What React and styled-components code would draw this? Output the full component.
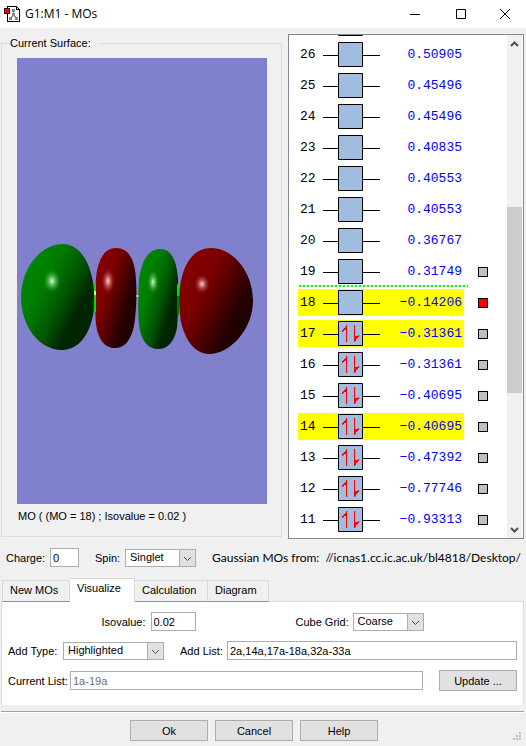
import React from 'react';
import styled, { createGlobalStyle } from 'styled-components';

const GlobalStyle = createGlobalStyle`
  * { box-sizing: border-box; }
  body {
    margin: 0;
    background: #f0f0f0;
    color: #000;
    font: 11px/14px "Liberation Sans", Arial, sans-serif;
  }
  button, input, select { font: inherit; color: inherit; }
`;

const orbitals = [
  { id: 26, energy: '0.50905' },
  { id: 25, energy: '0.45496' },
  { id: 24, energy: '0.45496' },
  { id: 23, energy: '0.40835' },
  { id: 22, energy: '0.40553' },
  { id: 21, energy: '0.40553' },
  { id: 20, energy: '0.36767' },
  { id: 19, energy: '0.31749', surface: true },
  { id: 18, energy: '−0.14206', surface: true, highlighted: true, current: true },
  { id: 17, energy: '−0.31361', surface: true, highlighted: true, filled: true },
  { id: 16, energy: '−0.31361', surface: true, filled: true },
  { id: 15, energy: '−0.40695', surface: true, filled: true },
  { id: 14, energy: '−0.40695', surface: true, highlighted: true, filled: true },
  { id: 13, energy: '−0.47392', surface: true, filled: true },
  { id: 12, energy: '−0.77746', surface: true, filled: true },
  { id: 11, energy: '−0.93313', surface: true, filled: true },
];

const GAP_BELOW = 19;

const TitleBar = styled.header`
  display: flex;
  align-items: center;
  height: 28px;
  padding-left: 4px;
  background: #fff;
`;

const Title = styled.h1`
  flex: 1;
  margin: 0 0 0 5px;
  font: 12px/16px "Open Sans", "Noto Sans", sans-serif;
`;

const CaptionButton = styled.button`
  display: flex;
  align-items: center;
  justify-content: center;
  width: 46px;
  height: 24px;
  padding: 0;
  border: 0;
  background: none;

  &:last-child { width: 42px; }
`;

const Main = styled.main`
  display: flex;
  gap: 6px;
  padding: 6px 2px 0 1px;
`;

const Group = styled.fieldset`
  flex: 1;
  min-width: 0;
  margin: 2px 0;
  padding: 8px 14px 13px 15px;
  border: 1px solid #dcdcdc;
`;

const Legend = styled.legend`
  margin-left: -8px;
  padding: 0 8px 0 1px;
  line-height: 14px;
`;

const Surface = styled.svg`
  display: block;
  width: 100%;
  height: 446px;
  background: #8080cc;
`;

const Caption = styled.p`
  margin: 5px 1px 0;
`;

const LevelPanel = styled.section`
  display: flex;
  width: 236px;
  height: 505px;
  padding-right: 1px;
  border: 1px solid #828790;
  background: #fff;
`;

const Levels = styled.div`
  display: flex;
  flex: 1;
  flex-direction: column;
  justify-content: flex-end;
  gap: 4px;
  padding: 0 19px 5px 9px;
  overflow: hidden;
`;

const LevelRow = styled.div`
  display: flex;
  flex: none;
  align-items: center;
  justify-content: space-between;
  height: 27px;
`;

const Level = styled.div`
  display: flex;
  align-items: center;
  width: 166px;
  height: 27px;
  padding: 0 2px;
  background: ${({ $highlighted }) => ($highlighted ? '#ff0' : 'none')};
  font: 13px/27px "Liberation Mono", "Courier New", monospace;
`;

const LevelNumber = styled.span`
  width: 23px;
`;

const Energy = styled.span`
  flex: 1;
  color: #00f;
  text-align: right;
`;

const Marker = styled.input`
  appearance: none;
  width: 10px;
  height: 10px;
  margin: 0;
  border: 1px solid #000;
  background: #c0c0c0;

  &:checked { background: #f00; }
`;

const Gap = styled.div`
  flex: none;
  width: 169px;
  height: 2px;
  margin: -4px 0 -2px 1px;
  background: repeating-linear-gradient(90deg, #0f0 0 2px, #fff 2px 4px);
`;

const ScrollBar = styled.div`
  display: flex;
  flex-direction: column;
  justify-content: space-between;
  align-items: center;
  width: 15px;
  background: #f0f0f0;
`;

const ScrollButton = styled.button`
  display: flex;
  align-items: center;
  justify-content: center;
  width: 15px;
  height: 17px;
  padding: 0;
  border: 0;
  background: none;
`;

const Track = styled.div`
  display: flex;
  flex: 1;
  flex-direction: column;
  width: 100%;
`;

const Space = styled.div`
  flex: ${({ $size }) => $size};
`;

const Thumb = styled.div`
  flex: 186;
  background: #cdcdcd;
`;

const MoleculeBar = styled.div`
  display: flex;
  align-items: center;
  gap: 16px;
  margin-top: 9px;
  padding-left: 6px;
`;

const Field = styled.div`
  display: flex;
  align-items: center;
  flex: ${({ $grow }) => ($grow ? '1' : 'none')};
`;

const Label = styled.label`
  flex: none;
  width: ${({ $width }) => $width}px;
`;

const TextBox = styled.input`
  flex: ${({ $width }) => ($width ? 'none' : '1')};
  width: ${({ $width }) => ($width ? `${$width}px` : 'auto')};
  min-width: 0;
  height: 19px;
  padding: 1px 2px 0;
  border: 1px solid #abadb3;
  border-radius: 0;
  background: #fff;

  &:disabled { color: #6d6d6d; }
`;

const SelectFrame = styled.div`
  position: relative;
  width: ${({ $width }) => $width}px;
  height: 18px;
`;

const SelectBox = styled.select`
  appearance: none;
  display: block;
  width: 100%;
  height: 18px;
  padding: 0 18px 2px 4px;
  border: 1px solid #abadb3;
  border-radius: 0;
  background: #fff;
`;

const SelectArrow = styled.span`
  position: absolute;
  top: 0;
  right: 0;
  display: flex;
  align-items: center;
  justify-content: center;
  width: 17px;
  height: 18px;
  padding-top: 2px;
  border: 1px solid #adadad;
  background: #e1e1e1;
  pointer-events: none;
`;

const Source = styled.span`
  font: 12px/16px Lato, "Open Sans", sans-serif;
  white-space: pre;
`;

const TabList = styled.div`
  position: relative;
  display: flex;
  align-items: flex-end;
  height: 24px;
  margin: 11px 2px -1px;
`;

const Tab = styled.button`
  width: ${({ $width }) => $width}px;
  height: 22px;
  padding: 0 0 2px 7px;
  border: 1px solid #d9d9d9;
  border-width: 1px 1px 1px 0;
  border-bottom-color: #8c9494;
  background: #f0f0f0;
  text-align: left;

  &:first-child { border-left-width: 1px; }

  &[aria-selected='true'] {
    height: 24px;
    padding-bottom: 4px;
    border-bottom-color: #fff;
    background: #fff;
  }
`;

const TabPanel = styled.section`
  display: flex;
  flex-direction: column;
  gap: 10px;
  margin: 0 2px 0 1px;
  padding: 10px 6px 14px;
  border: 1px solid #dcdcdc;
  border-bottom: 0;
  background: #fff;
`;

const PanelRow = styled.div`
  display: flex;
  align-items: center;
  gap: 16px;
`;

const CenteredRow = styled(PanelRow)`
  justify-content: center;
  gap: 100px;
`;

const Button = styled.button`
  width: 78px;
  height: 21px;
  padding: 0;
  border: 1px solid #adadad;
  background: #e1e1e1;
`;

const Footer = styled.footer`
  position: relative;
  display: flex;
  justify-content: center;
  gap: 7px;
  margin: 6px 2px 0 1px;
  padding: 8px 17px 5px 0;
  border-top: 1px solid #a0a0a0;
  box-shadow: inset 0 1px #fff;
`;

const Grip = styled.svg`
  position: absolute;
  right: 3px;
  bottom: 6px;
`;

const AppIcon = () => (
  <svg width="16" height="16" viewBox="0 0 16 16" shapeRendering="crispEdges" aria-hidden="true">
    <path d="M3.5 .5h9l3 3v12h-12z" fill="#fff" stroke="#000" />
    <path d="M12.5 .5v3h3" fill="none" stroke="#000" />
    <path d="M9.5 4v5l-3 3M9.5 9l3 3" fill="none" stroke="#888" />
    <path d="M8 3h3v3H8zM8 7h3v3H8zM5 11h3v3H5zM11 11h3v3h-3z" fill="#888" />
    <path d="M.5 2.5h5v5h-5z" fill="#f00" stroke="#400" />
  </svg>
);

const Chevron = ({ up, thin }) => (
  <svg width="9" height="6" viewBox="0 0 9 6" aria-hidden="true">
    <path
      d={up ? 'M1 5l3.5-3.5L8 5' : 'M1 1l3.5 3.5L8 1'}
      fill="none"
      stroke="#505050"
      strokeWidth={thin ? 1 : 2}
    />
  </svg>
);

const Spins = ({ filled }) => (
  <svg width="57" height="25" viewBox="0 0 57 25" aria-hidden="true">
    <path d="M0 13.5h57" stroke="#000" />
    <path d="M15.5 .5h24v24h-24z" fill="#a0bde0" stroke="#000" />
    {filled && (
      <g fill="#f00" shapeRendering="crispEdges">
        <path d="M23 4h1v17h-1zM31 4h1v17h-1z" />
        <path d="M24 4v4l-3 1-2 3v-2zM31 21v-5l5-2v1l-3 4z" />
      </g>
    )}
  </svg>
);

const Lobe = ({ d, color, glow }) => (
  <g>
    <path d={d} fill={`url(#${color})`} />
    <ellipse cx={glow[0]} cy={glow[1]} rx={glow[2]} ry={glow[3]} fill={`url(#${color}Glow)`} />
  </g>
);

const OrbitalSurface = () => (
  <Surface viewBox="0 0 250 446" role="img" aria-label="Molecular orbital surface">
    <defs>
      <linearGradient id="green" x1=".15" y1=".15" x2=".9" y2=".7">
        <stop offset="0" stopColor="#008600" />
        <stop offset=".3" stopColor="#007c00" />
        <stop offset=".6" stopColor="#005600" />
        <stop offset=".85" stopColor="#002600" />
      </linearGradient>
      <linearGradient id="red" x1=".15" y1=".15" x2=".9" y2=".7">
        <stop offset="0" stopColor="#860000" />
        <stop offset=".3" stopColor="#7a0000" />
        <stop offset=".6" stopColor="#4c0000" />
        <stop offset=".85" stopColor="#220000" />
      </linearGradient>
      <radialGradient id="greenGlow">
        <stop offset="0" stopColor="#d0f5d0" />
        <stop offset=".3" stopColor="#78cc78" stopOpacity=".9" />
        <stop offset="1" stopColor="#109010" stopOpacity="0" />
      </radialGradient>
      <radialGradient id="redGlow">
        <stop offset="0" stopColor="#f5d0d0" />
        <stop offset=".3" stopColor="#d07878" stopOpacity=".9" />
        <stop offset="1" stopColor="#901010" stopOpacity="0" />
      </radialGradient>
    </defs>
    <path d="M118 237h4v2h-4z" fill="#e0e0d0" />
    <Lobe
      color="green"
      d="M46 186C60 186 69 199 73 212C77 224 78 238 77 250C75 272 64 292 45 292C22 292 4 268 4 239C4 210 24 186 46 186Z"
      glow={[35, 223, 9, 12]}
    />
    <Lobe
      color="red"
      d="M99 190C112 190 118 202 119 222C120 240 119 256 117 268C114 282 108 290 98 290C88 290 81 282 79 266C78 255 78 238 79 220C81 202 87 190 99 190Z"
      glow={[91, 223, 7, 13]}
    />
    <Lobe
      color="green"
      d="M143 191C155 191 160 204 161 222C162 240 161 256 160 270C157 284 151 291 141 291C131 291 124 283 122 267C121 255 121 240 122 222C124 204 131 191 143 191Z"
      glow={[136, 224, 6, 12]}
    />
    <Lobe
      color="red"
      d="M194 190C216 190 236 214 236 243C236 270 214 296 192 296C178 296 169 282 165 268C162 256 161 236 164 223C168 203 178 190 194 190Z"
      glow={[185, 226, 8, 10]}
    />
    <path d="M77 226h2v28h-2zM160 226h2v12h-2z" fill="#00e000" />
    <path d="M160 238h2v19h-2z" fill="#007800" />
    <path d="M77 233h2v4h-2z" fill="#e0e8d8" />
  </Surface>
);

const Select = ({ id, width, value }) => (
  <SelectFrame $width={width}>
    <SelectBox id={id} defaultValue={value}>
      <option>{value}</option>
    </SelectBox>
    <SelectArrow><Chevron thin /></SelectArrow>
  </SelectFrame>
);

export default () => (
  <>
    <GlobalStyle />
    <TitleBar>
      <AppIcon />
      <Title>G1:M1 - MOs</Title>
      <CaptionButton aria-label="Minimize">
        <svg width="10" height="10"><path d="M0 5.5h10" stroke="#000" /></svg>
      </CaptionButton>
      <CaptionButton aria-label="Maximize">
        <svg width="10" height="10"><path d="M.5 .5h9v9h-9z" fill="none" stroke="#000" /></svg>
      </CaptionButton>
      <CaptionButton aria-label="Close">
        <svg width="10" height="10"><path d="M0 0l10 10M10 0L0 10" stroke="#000" /></svg>
      </CaptionButton>
    </TitleBar>

    <Main>
      <Group>
        <Legend>Current Surface:</Legend>
        <OrbitalSurface />
        <Caption>MO ( (MO = 18) ; Isovalue = 0.02 )</Caption>
      </Group>
      <LevelPanel>
        <Levels>
          {/* next level up, scrolled almost out of view */}
          <LevelRow>
            <Level>
              <LevelNumber />
              <Spins />
            </Level>
          </LevelRow>
          {orbitals.map((mo) => (
            <React.Fragment key={mo.id}>
              <LevelRow>
                <Level $highlighted={mo.highlighted}>
                  <LevelNumber>{mo.id}</LevelNumber>
                  <Spins filled={mo.filled} />
                  <Energy>{mo.energy}</Energy>
                </Level>
                {mo.surface && (
                  <Marker type="checkbox" aria-label={`Surface ${mo.id}`} defaultChecked={mo.current} />
                )}
              </LevelRow>
              {mo.id === GAP_BELOW && <Gap />}
            </React.Fragment>
          ))}
        </Levels>
        <ScrollBar>
          <ScrollButton aria-label="Scroll up"><Chevron up /></ScrollButton>
          <Track>
            <Space $size={155} />
            <Thumb />
            <Space $size={128} />
          </Track>
          <ScrollButton aria-label="Scroll down"><Chevron /></ScrollButton>
        </ScrollBar>
      </LevelPanel>
    </Main>

    <MoleculeBar>
      <Field>
        <Label htmlFor="charge" $width={44}>Charge:</Label>
        <TextBox id="charge" $width={29} defaultValue="0" />
      </Field>
      <Field>
        <Label htmlFor="spin" $width={30}>Spin:</Label>
        <Select id="spin" width={71} value="Singlet" />
      </Field>
      <Source>Gaussian MOs from:  //icnas1.cc.ic.ac.uk/bl4818/Desktop/</Source>
    </MoleculeBar>

    <TabList role="tablist">
      <Tab role="tab" $width={68}>New MOs</Tab>
      <Tab role="tab" $width={65} aria-selected="true">Visualize</Tab>
      <Tab role="tab" $width={73}>Calculation</Tab>
      <Tab role="tab" $width={61}>Diagram</Tab>
    </TabList>
    <TabPanel role="tabpanel">
      <CenteredRow>
        <Field>
          <Label htmlFor="isovalue" $width={49}>Isovalue:</Label>
          <TextBox id="isovalue" $width={45} defaultValue="0.02" />
        </Field>
        <Field>
          <Label htmlFor="grid" $width={57}>Cube Grid:</Label>
          <Select id="grid" width={71} value="Coarse" />
        </Field>
      </CenteredRow>
      <PanelRow>
        <Field>
          <Label htmlFor="type" $width={55}>Add Type:</Label>
          <Select id="type" width={101} value="Highlighted" />
        </Field>
        <Field $grow>
          <Label htmlFor="list" $width={47}>Add List:</Label>
          <TextBox id="list" defaultValue="2a,14a,17a-18a,32a-33a" />
        </Field>
      </PanelRow>
      <PanelRow>
        <Field $grow>
          <Label htmlFor="current" $width={62}>Current List:</Label>
          <TextBox id="current" defaultValue="1a-19a" disabled />
        </Field>
        <Button>Update ...</Button>
      </PanelRow>
    </TabPanel>

    <Footer>
      <Button>Ok</Button>
      <Button>Cancel</Button>
      <Button>Help</Button>
      <Grip width="8" height="8" viewBox="0 0 8 8" fill="#bfbfbf" aria-hidden="true">
        <path d="M6 0h2v2H6zM3 3h2v2H3zM6 3h2v2H6zM0 6h2v2H0zM3 6h2v2H3zM6 6h2v2H6z" />
      </Grip>
    </Footer>
  </>
);
